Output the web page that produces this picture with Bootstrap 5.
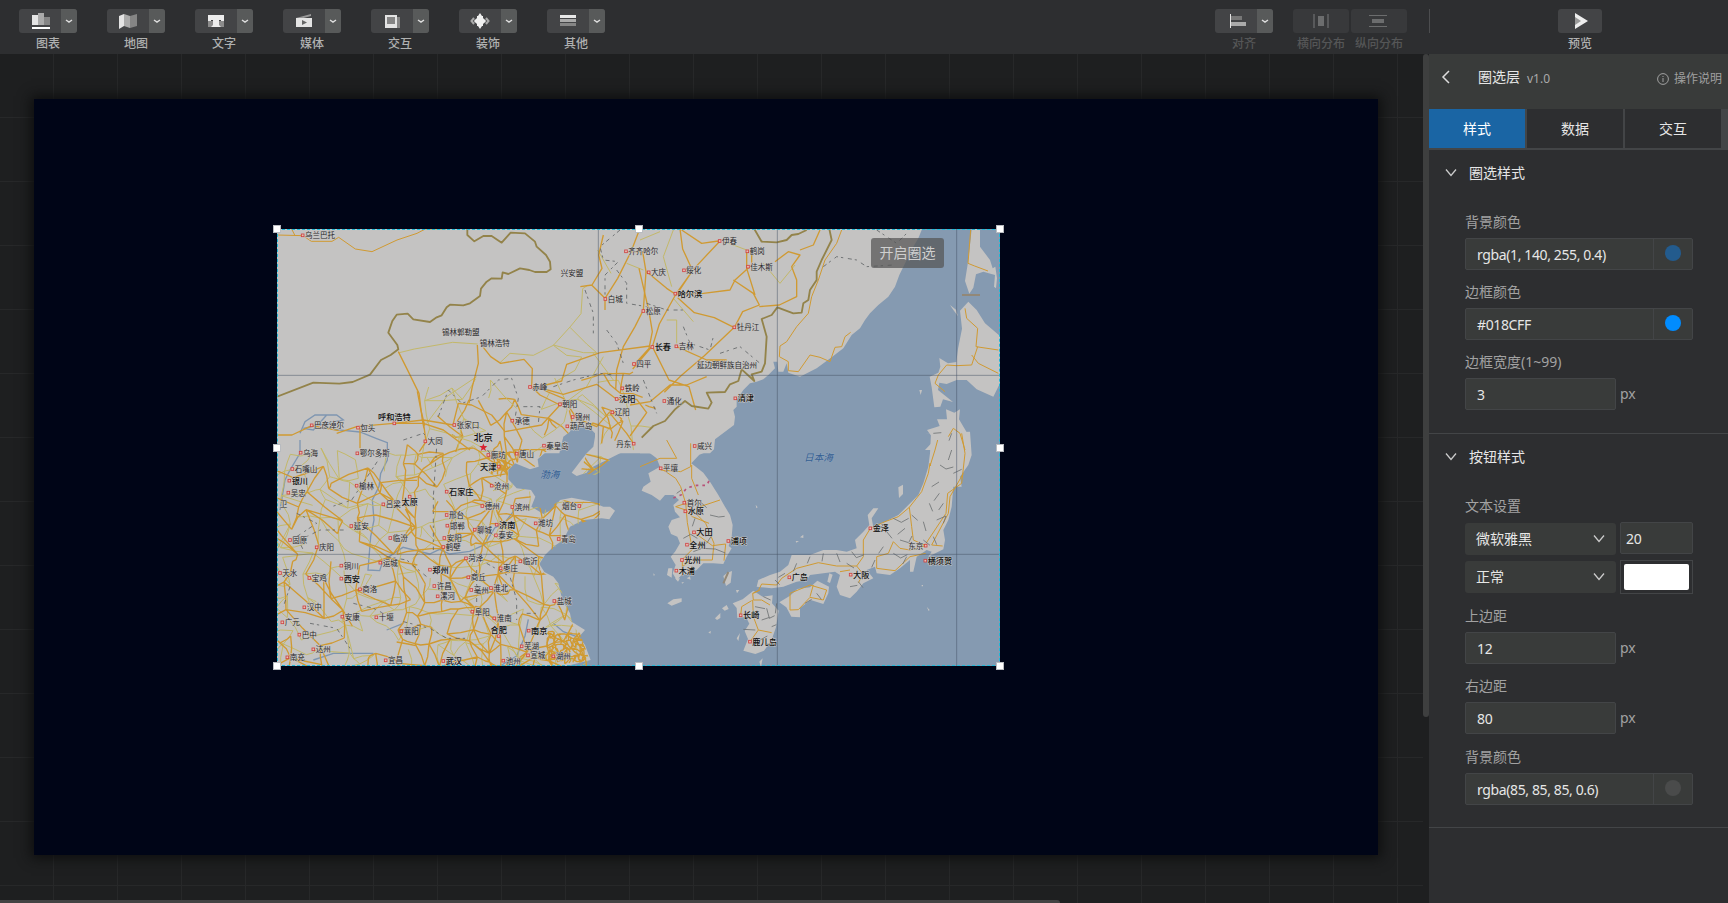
<!DOCTYPE html>
<html lang="zh-CN">
<head>
<meta charset="utf-8">
<meta name="viewport" content="width=device-width, initial-scale=1">
<title>圈选层</title>
<link href="https://cdn.jsdelivr.net/npm/bootstrap@5.3.0/dist/css/bootstrap.min.css" rel="stylesheet">
<style>
:root{--ink:#e6e6e6;--panel:#2d2e30;--field:#393b3a;--line:#434547}
body{width:1728px;height:903px;overflow:hidden;background:#1e1f20;color:var(--ink);font:14px/20px "Noto Sans","Noto Sans CJK SC",sans-serif}
svg{display:block}
.toolbar{height:54px;background:var(--panel);padding:9px 0 0 19px}
.tool{width:58px}
.tool-btn{height:24px;border-radius:3px;overflow:hidden;background:#434446}
.tool-btn .caret{width:16px;background:#585a5a}
.tool-name{font-size:12px;line-height:18px;padding-top:2px;color:#b0b1b1;font-weight:500;white-space:nowrap}
.faded .tool-name{color:#555657}
.dist{width:56px}.dist .tool-btn{background:#38393b}
.tool-sep{width:1px;height:24px;background:#4c4d4f;margin:0 128px 0 22px}
.preview{width:44px;margin-right:126px}
.stage{width:1423px;height:849px;background-color:#1e1f20;background-image:linear-gradient(90deg,#272829 1px,transparent 1px),linear-gradient(#272829 1px,transparent 1px);background-size:64px 64px;background-position:53px 0,0 63px;padding:45px 0 0 34px}
.screen{width:1344px;height:756px;background:#000517;box-shadow:0 0 12px 3px #0d0e0e;padding:130px 0 0 243px}
.map-box{width:723px;height:437px}
.map-frame{inset:0;border:1px dashed #20b9d8}
.handle{width:8px;height:8px;background:#fff;border:1px solid #b9bcc0;transform:translate(-50%,-50%)}
.circle-btn{top:9px;left:594px;width:73px;height:30px;border-radius:3px;background:rgba(85,85,85,.72);color:#cfcfcf;line-height:30px}
.hbar{left:0;bottom:0;width:1060px;height:3px;background:#434343;border-radius:0 3px 0 0}
.gutter{width:6px;background:#1e1f20}.gutter>div{height:663px;background:#3e3f3f;border-radius:3px}
.panel{width:299px;background:var(--panel)}
.panel-head{height:55px;background:#393b3a;padding:0 6px 9px 12px}
.tab-row{height:41px;background:#434547;border-bottom:2px solid #434547;padding-right:7px;gap:2px}
.tab-item{background:var(--panel);line-height:40px;height:39px}
.tab-item.on{background:#1a65a4;color:#fff}
.sec{border-bottom:1px solid var(--line);padding-left:36px}
.sec-title{height:48px;margin-left:-20px;gap:12px}
.lab{color:#a2a2a2;line-height:20px}
.fld{height:32px;border:1px solid var(--line);border-radius:2px;background:var(--field);padding:0 11px;line-height:32px;color:var(--ink);font-size:14px;letter-spacing:-.38px}
.fld.full{width:228px}.fld.half{width:151px}.fld.quarter{width:73px;padding-left:5px}
.sw{width:39px;border-left:1px solid var(--line);height:30px;margin-right:-11px}
.sw i{width:16px;height:16px;border-radius:50%;margin-bottom:3px}
.sel{width:151px;height:32px;border-radius:3px;background:var(--field);padding:0 11px}
.color-box{width:73px;height:34px;border:1px solid var(--line);padding:3px}
.color-box div{height:26px;background:#fff;border-radius:2px}
.unit{color:#a2a2a2;padding-left:4px}
#map text{font-family:"Noto Sans CJK SC",sans-serif;paint-order:stroke;stroke:#c8c7c6;stroke-width:3px;fill:#28282a;font-size:22.5px;dominant-baseline:central}
#map text.big{font-size:24.5px;font-weight:500;fill:#111}
#map text.sea{fill:#345f93;stroke:#8ea2b9;font-style:italic;font-size:29px}
.land{fill:#c4c3c2}
.water{fill:#859ab1}
.rd{fill:none;stroke:#d09a32;stroke-width:4;stroke-linejoin:round}
.rd2{fill:none;stroke:#c3b869;stroke-width:3}
.thin{stroke-width:3}
.river{fill:none;stroke:#7f96b1;stroke-width:4}
.bd{fill:none;stroke:#93834a;stroke-width:5.5;stroke-linejoin:round}
.prov{fill:none;stroke:#5c5f62;stroke-width:2.4;stroke-dasharray:12 9 7 14}
.tick{fill:none;stroke:#6b6e70;stroke-width:2.4}
.grat{stroke:#465266;stroke-opacity:.5;stroke-width:3}
</style>
</head>
<body>
<header class="toolbar d-flex align-items-start">
  <div class="d-flex" style="gap:30px">
    <div class="tool text-center"><div class="tool-btn d-flex"><svg width="42" height="24"><path fill="#e4e4e4" d="M13 6h6v10h-6z"/><path fill="#aaa" d="M19 4h6v12h-6z"/><path fill="#858585" d="M25 8h6v8h-6z"/><path fill="#fff" d="M13 18h18v2H13z"/></svg><span class="caret"><svg width="16" height="24"><path d="M5 11l3 2 3-2" fill="none" stroke="#ddd" stroke-width="1.5"/></svg></span></div><div class="tool-name">图表</div></div>
    <div class="tool text-center"><div class="tool-btn d-flex"><svg width="42" height="24"><path fill="#e4e4e4" d="M12 7l5-2v12l-5 3z"/><path fill="#aaa" d="M17 5l6 2v12l-6-2z"/><path fill="#858585" d="M23 7l7-2v12l-7 2z"/></svg><span class="caret"><svg width="16" height="24"><path d="M5 11l3 2 3-2" fill="none" stroke="#ddd" stroke-width="1.5"/></svg></span></div><div class="tool-name">地图</div></div>
    <div class="tool text-center"><div class="tool-btn d-flex"><svg width="42" height="24"><path fill="#8b8b8b" d="M13 12h16v6H13z"/><path fill="#ececec" d="M13 6h16v6h-3v-1h-2v5l2 2h-10l2-2v-5h-2v1h-3z"/></svg><span class="caret"><svg width="16" height="24"><path d="M5 11l3 2 3-2" fill="none" stroke="#ddd" stroke-width="1.5"/></svg></span></div><div class="tool-name">文字</div></div>
    <div class="tool text-center"><div class="tool-btn d-flex"><svg width="42" height="24"><path fill="#989898" d="M13 9l15-4v2l-11 3z"/><path fill="#e4e4e4" d="M13 9h16v9H13z"/><path fill="#666" d="M19 11l5 2.500-5 2.500z"/></svg><span class="caret"><svg width="16" height="24"><path d="M5 11l3 2 3-2" fill="none" stroke="#ddd" stroke-width="1.5"/></svg></span></div><div class="tool-name">媒体</div></div>
    <div class="tool text-center"><div class="tool-btn d-flex"><svg width="42" height="24"><path fill="#858585" d="M17 8h12v11H17z"/><path fill="#e4e4e4" d="M14 6h12v13H14z"/><path fill="#858585" d="M16 8h8v7h-8z"/></svg><span class="caret"><svg width="16" height="24"><path d="M5 11l3 2 3-2" fill="none" stroke="#ddd" stroke-width="1.5"/></svg></span></div><div class="tool-name">交互</div></div>
    <div class="tool text-center"><div class="tool-btn d-flex"><svg width="42" height="24"><path d="M15 9l-2.500 3 2.500 3M27 9l2.500 3-2.500 3M16.500 10.500v3M25.500 10.500v3" fill="none" stroke="#aaa" stroke-width="2"/><path fill="#f0f0f0" d="M21 4l2 3h1v2l3 3-3 3v2h-1l-2 3-2-3h-1v-2l-3-3 3-3V7h1z"/></svg><span class="caret"><svg width="16" height="24"><path d="M5 11l3 2 3-2" fill="none" stroke="#ddd" stroke-width="1.5"/></svg></span></div><div class="tool-name">装饰</div></div>
    <div class="tool text-center"><div class="tool-btn d-flex"><svg width="42" height="24"><path fill="#e8e8e8" d="M13 6h16v3H13z"/><path fill="#aaa" d="M13 10h16v3H13z"/><path fill="#858585" d="M13 14h16v3H13z"/></svg><span class="caret"><svg width="16" height="24"><path d="M5 11l3 2 3-2" fill="none" stroke="#ddd" stroke-width="1.5"/></svg></span></div><div class="tool-name">其他</div></div>
  </div>
  <div class="d-flex ms-auto faded">
    <div class="tool text-center me-3"><div class="tool-btn d-flex"><svg width="42" height="24"><path fill="#e4e4e4" d="M15 5h1v14h-1z"/><path fill="#777" d="M16 7h11v4H16z"/><path fill="#aaa" d="M16 13h15v4H16z"/></svg><span class="caret"><svg width="16" height="24"><path d="M5 11l3 2 3-2" fill="none" stroke="#ddd" stroke-width="1.5"/></svg></span></div><div class="tool-name">对齐</div></div>
    <div class="dist text-center ms-1"><div class="tool-btn"><svg width="56" height="24"><path fill="#58595b" d="M20 5h2v14h-2zM34 5h2v14h-2z"/><path fill="#6c6d6e" d="M25 7h6v10h-6z"/></svg></div><div class="tool-name d-flex justify-content-center">横向分布</div></div>
    <div class="dist text-center" style="margin-left:2px"><div class="tool-btn"><svg width="56" height="24"><path fill="#6c6d6e" d="M18 6h18v1H18zM18 17h18v1H18zM21 10h12v4H21z"/></svg></div><div class="tool-name d-flex justify-content-center">纵向分布</div></div>
  </div>
  <div class="tool-sep"></div>
  <div class="preview text-center"><div class="tool-btn"><svg width="44" height="24"><path fill="#999" d="M17 5l8 7-8 7z"/><path fill="#eee" d="M17 4l13 8-13 8v-4l6-4-6-4z"/></svg></div><div class="tool-name">预览</div></div>
</header>

<main class="d-flex" style="height:849px">
  <section class="stage position-relative">
    <div class="screen">
      <div class="map-box position-relative">
        <svg id="map" width="723" height="437" viewBox="21 27 2169 1311">
          <rect class="water" width="2200" height="1400"/>
          <defs><clipPath id="landClip">
            <path d="M0 0H1140V640L1060 720 975 765 930 760 950 700 975 690V640L930 612 900 632 870 680 835 690 795 720 795 740 735 730 713 750 715 785 780 815 785 855 830 870 870 840 990 848V890L900 920 880 960 820 1010 810 1050 865 1090 900 1180 910 1220 930 1240 955 1310 950 1340H0Z"/>
            <path d="M1100 0H1967L1910 120 1780 300 1720 380 1590 470 1410 480 1395 590 1330 690 1270 720 1390 930 1380 980 1370 1030 1210 1060 1210 860 1170 680 1100 660Z"/>
          </clipPath></defs>
          <g class="land">
            <path d="M0 0H1145V700H975V640L960 625 930 614 905 618 900 635 880 650 868 700H0Z"/>
            <g transform="translate(1110 0)">
              <path d="M0 0H857L835 55 820 80 800 120 778 165 765 200 745 230 715 255 690 280 675 300 660 325 635 345 610 385 575 412 530 445 480 470 445 458 440 430 430 455 415 455 412 425 400 425 405 445 385 465 370 478 350 485 330 490 310 510 300 525 290 540 290 560 280 570 285 590 282 615 255 635 225 658 222 688 210 700H0Z"/>
              <path d="M995 27h25l0 53 30 40 8 25 8-5 5 35-3 30-6-5 3-35-35-10-22 8-8 40-12 18-13-38 8-50 6-50z"/>
              <path d="M985 245l25 25 25 40 45 38V490l-20 40-50-22-30-28h-30l-30 12-22-4-4 22 30 24 15 12-30-8-8 22-18 2-8-60-6-32 26-12 6-18-3-26 26 16 25-4 5-40 12-60-6-54zM930 255l18 14 6 20-16-22zM838 510l8 0-4 15z"/>
              <path d="M918 568l25 10 17-10-3 30 24 40 5 52H855l28-30-22-30 38-12-8-20 30 0z"/>
            </g>
            <g transform="translate(0 660)">
              <path d="M0-10H868L860 8 835 30 803 58 806 80 780 88 735 70 715 90 715 118 740 145 783 150 796 170 784 200 820 222 850 207 870 180 905 173 960 184 1000 200 1020 200 1035 212 1018 238 995 235 940 240 900 260 890 280 880 300 850 320 825 345 808 372 823 396 850 410 865 430 877 480 900 520 905 545 945 570 927 590 945 615 962 660 890 678 880 700H0ZM975-10H1145L1140 12 1050 40 1010 60 960 85 950 98 920 108 905 98 930 65 950 40 970 20Z"/>
            </g>
            <g transform="translate(960 660)">
              <path d="M40 0H372L370 28 328 44 304 70 340 98 360 125 385 165 405 200 420 225 428 255 425 290 416 318 425 325 410 350 400 372 370 370 340 370 320 390 300 400 275 405 260 420 248 400 257 375 242 350 255 335 270 310 262 290 243 282 235 260 245 240 270 232 255 215 250 195 267 180 250 165 225 165 210 182 185 165 155 152 160 140 182 125 175 100 210 80 200 55 180 40 150 30 130 12 95 20 50 40Z"/>
              <path d="M1005-20l18 0-3 60-5 40-15 50-15 35-30 30-30 30-40 20-35 17-5-27 20-30-15 0-17 20 5 30-18 20-25 25 5 25-30 10-30-5-40 0-40 15h-55l-10 30-25 20-30 10-35 15-5 20 45 5 35-5 40-15 30-5 10-15 40-5 35-5 15 10-10 35 10 25 30 10 20-20 20-25 30-15-20-25 25-10 5 20 40 5 30-20 30-25 0 35 10 0 10-45 30-20 15 5-10 15 45-22 5-28-5-30 15-30 10-40 5-60 25 0-5-30 25-35 10-30-5-70z"/>
              <path d="M568 487l32-20 22-20 38-5 22-20 35 18-2 20-15 32-38-12-32 24 0 28-26-2-15-28zM490 452l28 18 30-4-2 24 20 22-8 50-14 40-22 30-26 10-36-10 14-35-10-24 14-22-10-20-26 3-2-30-12-14 30-12z"/>
              <path d="M232 490l18-12 25-3v10l-30 12zM925 142l14-8 0 28-12 12zM400 408l12-10 14-5-4 35-14 10zM375 535l16-16 0 15-10 6zM396 505l14-10 6 12-12 5zM630 292l10-8v10zM617 303h10l-8 5zM497 194l6 8-4 3zM438 450h10l-7 10zM440 595l10-16-5 24zM508 665l10-10-5 26zM355 577l8-4-2 8zM1010 500l9 10-3 3zM235 385h12l-2 28-14-8zM190 400l5 5-4 2zM275 427h8l-7 4zM995 435h4v4h-4zM255 415h15l-6 10zM290 415l10-6 2 10zM718 400l10 4-8 25-8-4z"/>
            </g>
          </g>
          <g class="river">
            <path d="M90 640l15-35 30-20 65 0 20 15-120 25M100 625l30 5 40-45M190 628l80 8 50 20 32 12V720l-20 40-5 40-20 40 5 60-10 50-8 100 35 2 10-30 60-40 80 20 30-14 30 14 60-8 45-20 30-50 30-15 30-40 25-15M90 660V700l-30 50-15 30-15 90M850 1210l30 25 40 15M130 1320l60-20 120 0M350 1230l50-20M690 1338l50-30 25-60 10-50"/>
          </g>
          <g id="network" clip-path="url(#landClip)"></g>
          <g class="rd2">
            <path d="M388 398l45-11 115-20 75 5M690 428l30-28 70 6 60-30 50-55 33-40 5-75 15-10M900 322l50 50 30 26-40 0-60-15-30-8M850 376l40 30 45 5-20 40-60 35M970 400l60 80M983 90l40 70M1110 60l60-25M1210 30l-30 80 25 90M1210 235l60 70M1070 130l50 20M1350 60l80 30M1480 130l50 60 45-55M1190 300h30v70M620 470l-90 60-60 80M1000 410l-50 90-80 60"/>
          </g>
          <g class="rd">
            <path class="thin" d="M21 45l78 2 25 17h62l20-12 50 35 50 8 75-35 60-20 25-13h62M65 27l10 20"/>
            <path d="M385 395l30 60 32 65 10 80 5 25M622 375l3 55-18 70-10 50M640 382l22 28 30 20 70-12 25 28-2 55M1000 45l-14 60 10 40-30 50-35 5M965 195l40 40 0 35M1108 30l-25 65-40 80-38 60M1068 95h50l10 60-8 115-25 50-35 60-20 70-3 60M1040 538l-60-45-100 30-90-25M1140 378l-150 20-100 35-15 50-60 15M1020 575l-40 45-60-25-40-60-60-25M785 500l25 25 60 30-55 60-110 20-40-50-60-30-40-5-15 60M200 640l60-20 110-10 90-10 90 15M270 625v60M370 610l90 0 60 20 80 60M460 605l8 60-20 30M21 645h45l60-28 80 15"/>
            <path d="M1092 435l45-50 10-50-10-60-30-130M1230 27l8 60 30 65-50 70-50 90-20 65-60 70M1235 30l60 40 50-7M1350 63l-80 85-50 75 80-3 80-10 15-30 50-45 0-50M1430 95l0 50 25 80M1390 180l60 40 18 35-50 20-25 48-60-30-60-15-50-45M1468 260l60-5 52-25 0-50-15-40 25-35-35-10-40 30M1393 322l-90 85-70 60-50 50M1590 90l40-15 20-45M1147 380l50 100 60 20 20 70M1220 380l90 40 60 0M1130 155l60 50 30 20M1140 545l60-50 50 0 60-25M1040 538l60 0 30 40-50 70M1140 545l-60 10M1020 580l50 60 20 30M1000 620l-5 50"/>
            <path class="thin" d="M1715 30L1700 70 1665 120 1645 180 1625 230 1615 280 1580 320 1550 365 1530 378 1528 410 1555 425V452L1585 455 1620 405 1650 412 1680 425 1695 382 1715 380 1725 350 1742 337M1110 740l60-25 50 0-30-55M1172 745l45 30 15 25 15 50-30 10 30 10 20 20 50 20M1172 750l60 5 30-15 0-70M1247 848l5 60 15 80-30 30 0 50M1247 850l60 60 25 60-5 50-65 0-25 20M1290 860l60-20M1265 735l0 40 20 50M1272 937l55 40 40-5-5 50"/>
            <path class="thin" d="M2102 30l-8 100 20 8 40 15M2085 265l5 30 33 30-5 55 67 10M2123 380l-18 55-45 2-30-2-25 30-10 25 30 25M2105 405l20 25 60 30M1982 738L1980 730 1975 760 1955 815 1918 862 1885 890 1845 905 1801 925 1780 960 1780 1010 1760 1038 1700 1038 1645 1028 1580 1045 1535 1075 1520 1095 1475 1092 1465 1112 1448 1120M1918 862L1925 920 1930 960 1967 977 1920 990 1890 985 1870 965 1855 1000 1820 1010 1820 1045 1875 1052 1920 1010 1967 1000M2003 660L1995 690 1980 738M2075 640l10 60-10 90-42 30-5 60-60 90M2035 650L2050 625 2070 640 2085 690M2080 760L2040 830 2035 880 1985 975 2018 978M1470 1110l-20 10M1448 1120L1450 1140H1475L1500 1155M1445 1142L1415 1160 1412 1186M1448 1140L1450 1190 1465 1230 1440 1265M1465 1230l40 8M1560 1170v-50l60-25 50 15-10 30-40-8-35 37zM1620 1130l10-35M1760 1038l20 25-15 25M1740 1050l-30 5"/>
          </g>
          <g class="prov">
            <path d="M1050 30l-60 50 10 40 45 5-40 40 0 60M945 210l25 70 0 60M1040 150l30 40 0 60 60 10M1010 330l30 40 20 60M850 500l60-20 80-20 40 5M505 590l30-80 40 40 60-20 50-50 40-5 20 60-10 60M660 700l-30-40 15-20M760 560l50 0-5 50M400 660l60-20 40 40-10 150 0 160M345 690l-100 150-60 20M90 960l60-30 80 0M80 880l60 30-60 40 20 40M350 1010l60 10 60 50M250 1150l60 15 60 30M400 1205l80 20 50 30 60 0M650 1030l70 40 20 70 0 60M770 1180l30 0M60 1100l-20 60M120 1210l80 15 40 60M620 1050v100M1240 320l20 50 60 20 10-40M1350 400l60-20 60 50M1120 480l40 100M1660 140l40-30 60 10 30 20 80-5M1820 30l60 40 30-30M1130 250l60 20 50 0"/>
          </g>
          <path class="tick" d="M2010 735l18 12 22-6M2045 690l-10 30M2050 760l25-12M1985 800l22-14M2008 820l-16 22M1978 850l10 24M2020 850l-14 20M1960 905l8 28M2000 900l28-12-8 22M1925 885l18 16M1870 895l24 12 22-12M1905 925l-22 18M1850 935l16 20M1890 960l26 8 10-20M1840 980l-14 20M1870 1000l22 14 20-10M1815 1020l-10 22M1910 1010l-12 22M1960 960l20 16M1990 950l10 24M1745 995l14 18 22-8M1700 1000l10 26M1660 1000l-4 24M1620 1010l-8 20M1730 1030l22 14M1765 1085l14 18M1740 1100l22-4M1580 1030l-10 24M1545 1060l-20 12M1515 1080l14 14M1480 1130l22 10M1455 1160l30 6M1490 1165l8 30 16-8M1520 1150l-4 30M1475 1200l24-8M1420 1228l36 2M1505 1220l14-6M1470 1260l22-12M1240 955l22-12 20 12M1320 885l26 6 18-2M1270 995l26-10 40 2 30 12M1310 970l14-22M1275 895l-8 24M1290 845l20 18M1220 820l14-10M1605 1150l20-12M1640 1120l14 18M1990 640l24-2M2045 640l-8 22"/>
          <path class="bd" d="M21 530l109-42 78 3 40-5 52-22 33-44 29-15 23-17-3-13-27-37 12-35 13-19 33-3 17 17 50 8 20-14 15-6 15-24 10-8 40 2 20-6 30-22 3-22 17-21 15-10 30 1 3-19 17 5 35-17 28 5 17 6h35l12-8-2-23-12-20-28-25-5-15-30-25-43-2-27 30-30-20h-25l-27 16-21-19v-18"/>
          <path class="bd" transform="translate(1110 0)" d="M343 27l22 38 45 2 30-7 15-15 20-3 25-12M568 27l7 33-30 60-15 35v25l-20 30-5 30-15 10-5 28-25 2-48-18-17 23-30 12 15 53-5 80-10 25-30 8 8 20-38-35-10 35-25 10-15 23-55 2 15 30-10 18-50-8-20-15-30 25-30 35-35 15-35 35"/>
          <path d="M1210 834l25-10 15-20 30-8 30 0 8-15" fill="none" stroke="#b85278" stroke-width="5" stroke-dasharray="8 12"/>
          <path d="M2076 225h54M1360 1090l15-34" stroke="#928878" stroke-width="6"/>
          <g class="grat"><path d="M985 20V1340M1522 20V1340M2060 20V1340M20 466H2200M20 1003H2200"/></g>
          <g id="cities"></g>
        </svg>
        <div class="circle-btn position-absolute text-center">开启圈选</div>
        <div class="map-frame position-absolute"></div>
        <i class="handle position-absolute top-0 start-0"></i><i class="handle position-absolute top-0 start-50"></i><i class="handle position-absolute top-0 start-100"></i>
        <i class="handle position-absolute top-50 start-0"></i><i class="handle position-absolute top-50 start-100"></i>
        <i class="handle position-absolute top-100 start-0"></i><i class="handle position-absolute top-100 start-50"></i><i class="handle position-absolute top-100 start-100"></i>
      </div>
    </div>
    <div class="hbar position-absolute"></div>
  </section>
  <div class="gutter"><div></div></div>

  <aside class="panel">
    <div class="panel-head d-flex align-items-center">
      <svg width="10" height="14"><path d="M8 1L2 7l6 6" fill="none" stroke="#ddd" stroke-width="1.5"/></svg>
      <span style="margin-left:27px">圈选层</span><span style="font-size:12px;margin:3px 0 0 7px;color:#aaa">v1.0</span>
      <span class="ms-auto d-flex align-items-center" style="font-size:12px;gap:5px;color:#a0a0a0;padding-top:3px"><svg width="12" height="12"><circle cx="6" cy="6" r="5.400" fill="none" stroke="#a0a0a0"/><path d="M6 5v4M6 3v1" stroke="#a0a0a0"/></svg>操作说明</span>
    </div>
    <div class="tab-row d-flex text-center"><div class="tab-item on flex-fill">样式</div><div class="tab-item flex-fill">数据</div><div class="tab-item flex-fill">交互</div></div>
    <div class="sec" style="height:284px">
      <div class="sec-title d-flex align-items-center" style="padding-bottom:2px"><svg width="12" height="10"><path d="M1 1.500l5 6 5-6" fill="none" stroke="#ccc" stroke-width="1.300"/></svg><span>圈选样式</span></div>
      <div class="lab" style="padding-top:14px;height:40px">背景颜色</div>
      <div class="fld full d-flex justify-content-between"><span>rgba(1, 140, 255, 0.4)</span><span class="sw d-flex align-items-center justify-content-center"><i style="background:#235b8d"></i></span></div>
      <div class="lab" style="padding-top:12px;height:38px">边框颜色</div>
      <div class="fld full d-flex justify-content-between"><span>#018CFF</span><span class="sw d-flex align-items-center justify-content-center"><i style="background:#018cff"></i></span></div>
      <div class="lab" style="padding-top:12px;height:38px">边框宽度(1~99)</div>
      <div class="d-flex align-items-center"><div class="fld half">3</div><span class="unit">px</span></div>
    </div>
    <div class="sec" style="height:394px">
      <div class="sec-title d-flex align-items-center" style="padding-bottom:2px"><svg width="12" height="10"><path d="M1 1.500l5 6 5-6" fill="none" stroke="#ccc" stroke-width="1.300"/></svg><span>按钮样式</span></div>
      <div class="lab" style="padding-top:14px;height:40px">文本设置</div>
      <div class="d-flex gap-1"><div class="sel d-flex align-items-center justify-content-between" style="margin-top:1px"><span>微软雅黑</span><svg width="12" height="10"><path d="M1 1.500l5 6 5-6" fill="none" stroke="#ccc" stroke-width="1.300"/></svg></div><div class="fld quarter">20</div></div>
      <div class="d-flex gap-1" style="padding-top:5px"><div class="sel d-flex align-items-center justify-content-between" style="margin-top:1px"><span>正常</span><svg width="12" height="10"><path d="M1 1.500l5 6 5-6" fill="none" stroke="#ccc" stroke-width="1.300"/></svg></div><div class="color-box"><div></div></div></div>
      <div class="lab" style="padding-top:12px;height:38px">上边距</div>
      <div class="d-flex align-items-center"><div class="fld half">12</div><span class="unit">px</span></div>
      <div class="lab" style="padding-top:12px;height:38px">右边距</div>
      <div class="d-flex align-items-center"><div class="fld half">80</div><span class="unit">px</span></div>
      <div class="lab" style="padding-top:13px;height:39px">背景颜色</div>
      <div class="fld full d-flex justify-content-between"><span>rgba(85, 85, 85, 0.6)</span><span class="sw d-flex align-items-center justify-content-center"><i style="background:#4a4b4b"></i></span></div>
    </div>
  </aside>
</main>
<script src="https://cdn.jsdelivr.net/npm/bootstrap@5.3.0/dist/js/bootstrap.bundle.min.js"></script>
<script>
// x,y of the marker, name, optional flags: b = large city, l = label on the left, u = label above, d = below, n = no marker
const cities = `98,46,乌兰巴托;865,159,兴安盟,n;1068,94,齐齐哈尔;1136,157,大庆;1242,151,绥化;1349,63,伊春;1432,94,鹤岗;1434,140,佳木斯;1006,237,白城;1216,221,哈尔滨,b;1120,273,松原;509,336,锡林郭勒盟,n;622,370,锡林浩特,n;1393,322,牡丹江;1147,381,长春,b;1219,379,吉林;1092,432,四平;1274,435,延边朝鲜族自治州,n;780,501,赤峰;1057,505,铁岭;1040,537,沈阳,b;870,553,朝阳;1183,543,通化;1396,535,清津,b;1027,577,辽阳;908,591,锦州;892,619,葫芦岛;727,602,承德;553,615,张家口;373,610,呼和浩特,bu;125,616,巴彦淖尔;264,623,包头;466,664,大同;640,681,北京,c;822,677,秦皇岛;1091,671,丹东,l;1274,678,咸兴;92,698,乌海;262,700,鄂尔多斯;655,705,廊坊;740,701,唐山;686,740,天津,bl;67,747,石嘴山;58,782,银川,b;55,818,吴忠;22,853,卫,n;260,797,榆林;665,797,沧州;530,815,石家庄,b;419,830,太原,bd;340,853,吕梁;637,858,德州;727,861,滨州;928,858,烟台,l;530,885,邢台;680,914,济南,b;797,910,潍坊;532,917,邯郸;244,918,延安;614,929,聊城;678,946,泰安;361,954,临汾;523,954,安阳;866,957,青岛;60,960,固原;520,981,鹤壁;140,982,庆阳;588,1015,菏泽;751,1024,临沂;214,1037,铜川;331,1028,运城;692,1045,枣庄;480,1049,郑州,b;30,1059,天水;118,1074,宝鸡;214,1076,西安,b;595,1072,商丘;493,1098,许昌;270,1108,商洛;604,1110,亳州;663,1104,淮北;503,1129,漯河;853,1143,盐城;103,1162,汉中;607,1175,阜阳;217,1190,安康;319,1192,十堰;673,1195,淮南;37,1207,广元;394,1234,襄阳;686,1248,合肥,bu;776,1232,南京,b;88,1244,巴中;755,1279,芜湖;130,1288,达州;774,1306,宣城;850,1309,湖州;52,1312,南充;347,1321,宜昌;520,1323,武汉,b;700,1322,池州;1172,745,平壤;1243,848,首尔;1246,874,水原,b;1272,937,大田,b;1375,963,浦项,b;1251,974,全州,b;1236,1020,光州,b;1219,1052,木浦,b;1558,1072,广岛,b;1742,1064,大阪,b;1801,925,金泽,b;1967,977,东京,l;1966,1022,横须贺,b;1412,1186,长崎,b;1440,1265,鹿儿岛,b;810,763,渤海,s;1602,713,日本海,s`.split(';').map(r => r.split(','));
let out = '';
for (const [sx, sy, name, f = ''] of cities) {
  const x = +sx, y = +sy;
  const big = f.includes('b');
  if (f === 's') { out += `<text class="sea" x="${x}" y="${y - 2}">${name}</text>`; continue; }
  if (f === 'c') {
    out += `<path fill="#d92231" d="M640 670l3 8 9 0-7 6 3 9-8-5-8 5 3-9-7-6 9 0z"/><text x="611" y="650" style="font-size:29px;fill:#111;font-weight:500">${name}</text>`;
    continue;
  }
  if (f !== 'n') out += `<rect x="${x - 4}" y="${y - 4}" width="8" height="8" fill="#e5c0b2" stroke="#cf4141" stroke-width="2.500"/>`;
  let tx = x + 7, ty = y - 2, anchor = 'start';
  if (f.includes('l')) { tx = x - 7; anchor = 'end'; }
  if (f.includes('u')) { ty = y - 21; anchor = 'middle'; tx = x; }
  if (f.includes('d')) { ty = y + 14; anchor = 'middle'; tx = x; }
  out += `<text class="${big ? 'big' : ''}" x="${tx}" y="${ty}" text-anchor="${anchor}">${name}</text>`;
}
document.getElementById('cities').innerHTML = out;

// Dense road mesh of the eastern plain: a jittered lattice with most links kept
let seed = 71;
const rnd = () => (seed = (seed * 16807) % 2147483647) / 2147483647;
function mesh(x0, y0, x1, y1, step, keep, cls) {
  const nx = Math.ceil((x1 - x0) / step), ny = Math.ceil((y1 - y0) / step), p = [];
  for (let j = 0; j <= ny; j++) { p.push([]); for (let i = 0; i <= nx; i++) p[j].push([x0 + i * step + (rnd() - .5) * step * .95, y0 + j * step + (rnd() - .5) * step * .95]); }
  let d = '';
  const link = (a, b, k) => { if (rnd() < k) { const mx = (a[0] + b[0]) / 2 + (rnd() - .5) * 12, my = (a[1] + b[1]) / 2 + (rnd() - .5) * 12; d += `M${a[0] | 0} ${a[1] | 0}L${mx | 0} ${my | 0} ${b[0] | 0} ${b[1] | 0}`; } };
  for (let j = 0; j < ny; j++) for (let i = 0; i < nx; i++) { link(p[j][i], p[j][i + 1], keep); link(p[j][i], p[j + 1][i], keep); link(p[j][i], p[j + 1][i + 1], keep * .4); link(p[j][i + 1], p[j + 1][i], keep * .2); }
  return `<path class="${cls}" d="${d}"/>`;
}
document.getElementById('network').innerHTML =
  mesh(0, 700, 1000, 1360, 54, .6, 'rd2') + mesh(400, 680, 1000, 1360, 50, .72, 'rd') +
  mesh(0, 760, 420, 1360, 70, .7, 'rd') + mesh(460, 540, 860, 720, 60, .4, 'rd') +
  mesh(480, 500, 1130, 660, 66, .4, 'rd2') + mesh(900, 470, 1130, 640, 52, .45, 'rd') +
  mesh(670, 700, 725, 765, 13, .8, 'rd') + mesh(835, 1240, 950, 1325, 13, .85, 'rd');
</script>
</body>
</html>
